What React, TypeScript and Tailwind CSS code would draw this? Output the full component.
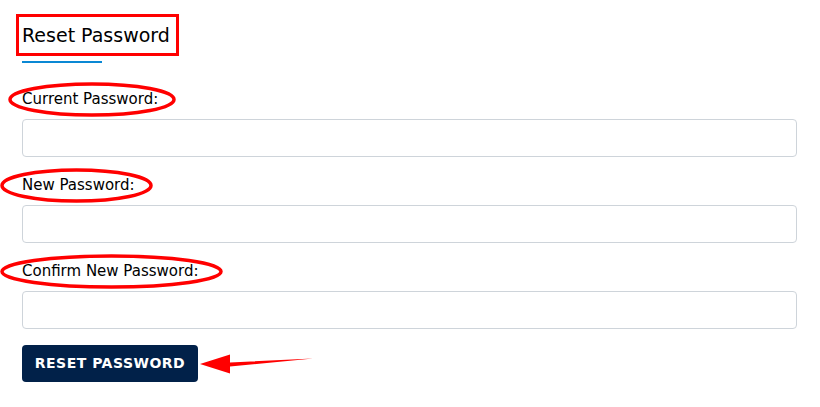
import React from "react";

const font = { fontFamily: '"Comic Sans MS", "DejaVu Sans", "Lato", sans-serif' };

// red hand-drawn style ellipse around a label
function Ring({ w, h, left, top }: { w: number; h: number; left: number; top: number }) {
  return (
    <svg
      className="pointer-events-none absolute"
      style={{ left, top }}
      width={w}
      height={h}
      viewBox={`0 0 ${w} ${h}`}
    >
      <ellipse
        cx={w / 2}
        cy={h / 2}
        rx={w / 2 - 2}
        ry={h / 2 - 2}
        fill="none"
        stroke="#ff0000"
        strokeWidth="3.5"
      />
    </svg>
  );
}

function Field({
  id,
  label,
  ring,
}: {
  id: string;
  label: string;
  ring: { w: number; h: number; left: number; top: number };
}) {
  return (
    <div className="flex flex-col">
      <div className="relative h-[28px] pt-[4px]">
        <label htmlFor={id} className="block text-[15px] leading-[24px] text-black">
          {label}
        </label>
        <Ring {...ring} />
      </div>
      <input
        id={id}
        type="password"
        className="mt-[8px] h-[38px] w-full rounded-[4px] border border-[#ced4da] bg-white px-3 outline-none"
      />
    </div>
  );
}

export default function App() {
  return (
    <div className="h-[407px] w-[820px] bg-white" style={font}>
      <div className="flex flex-col pl-[22px] pr-[23px] pt-[14px]">
        <div className="flex flex-col items-start">
          <h2 className="-ml-[6px] border-[3px] border-[#ff0000] pl-[3px] pr-[6px] text-[19px] leading-[36px] text-black">
            Reset Password
          </h2>
          <div className="mt-[5px] h-[2px] w-[80px] bg-[#0a88d4]" />
        </div>

        <div className="mt-[20px] flex flex-col gap-[12px]">
          <Field id="current" label="Current Password:" ring={{ w: 168, h: 35, left: -14, top: -1 }} />
          <Field id="new" label="New Password:" ring={{ w: 153, h: 35, left: -22, top: -1 }} />
          <Field id="confirm" label="Confirm New Password:" ring={{ w: 223, h: 35, left: -22, top: -1 }} />
        </div>

        <div className="relative mt-[16px] flex items-center">
          <button
            type="button"
            className="h-[37px] w-[176px] rounded-[4px] bg-[#012149] text-[14px] font-bold tracking-[0.5px] text-white"
          >
            RESET PASSWORD
          </button>
          <svg className="ml-[2px]" width="116" height="20" viewBox="0 0 116 20">
            <path d="M113 4.5 L30 8.5 L30 0.5 L0 10 L30 19.5 L30 12.5 Z" fill="#ff0000" />
          </svg>
        </div>
      </div>
    </div>
  );
}
